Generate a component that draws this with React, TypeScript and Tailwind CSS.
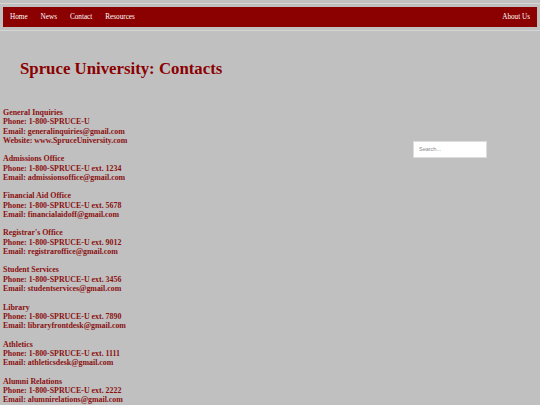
import React from 'react'

const contacts = [
  { name: 'General Inquiries', phone: '1-800-SPRUCE-U', email: 'generalinquiries@gmail.com', website: 'www.SpruceUniversity.com' },
  { name: 'Admissions Office', phone: '1-800-SPRUCE-U ext. 1234', email: 'admissionsoffice@gmail.com' },
  { name: 'Financial Aid Office', phone: '1-800-SPRUCE-U ext. 5678', email: 'financialaidoff@gmail.com' },
  { name: "Registrar's Office", phone: '1-800-SPRUCE-U ext. 9012', email: 'registraroffice@gmail.com' },
  { name: 'Student Services', phone: '1-800-SPRUCE-U ext. 3456', email: 'studentservices@gmail.com' },
  { name: 'Library', phone: '1-800-SPRUCE-U ext. 7890', email: 'libraryfrontdesk@gmail.com' },
  { name: 'Athletics', phone: '1-800-SPRUCE-U ext. 1111', email: 'athleticsdesk@gmail.com' },
  { name: 'Alumni Relations', phone: '1-800-SPRUCE-U ext. 2222', email: 'alumnirelations@gmail.com' },
]

export default function App() {
  return (
    <div className="min-h-[405px] w-[540px] overflow-hidden bg-[#c0c0c0] font-['Liberation_Serif',serif]">
      {/* header */}
      <div className="pt-[3px]">
        <div className="border-y border-[#d6d6d6] px-[3px] py-[3px]">
          <nav className="flex h-[20px] items-center justify-between bg-[#8b0000] px-[7px] text-[7.2px] text-white">
            <div className="flex gap-[13px]">
              <span>Home</span>
              <span>News</span>
              <span>Contact</span>
              <span>Resources</span>
            </div>
            <span>About Us</span>
          </nav>
        </div>
      </div>

      <h1 className="mt-[27px] pl-[20px] text-[16.8px] font-bold leading-[22px] text-[#8b0000]">
        Spruce University: Contacts
      </h1>

      <div className="mt-[28px] flex">
        <div className="w-[413px] pl-[3px] text-[7.9px] font-bold leading-[9.26px] text-[#8b1010]">
          {contacts.map((c, i) => (
            <div key={i} className="mb-[9.26px]">
              <div>{c.name}</div>
              <div>Phone: {c.phone}</div>
              <div>Email: {c.email}</div>
              {c.website && <div>Website: {c.website}</div>}
            </div>
          ))}
        </div>
        <div className="pt-[26px]">
          <input
            placeholder="Search..."
            className="h-[17px] w-[74px] border border-[#dddddd] bg-white px-[5px] font-['Liberation_Sans',sans-serif] text-[5.5px] text-[#555] outline-none placeholder:text-[#888]"
          />
        </div>
      </div>
    </div>
  )
}
